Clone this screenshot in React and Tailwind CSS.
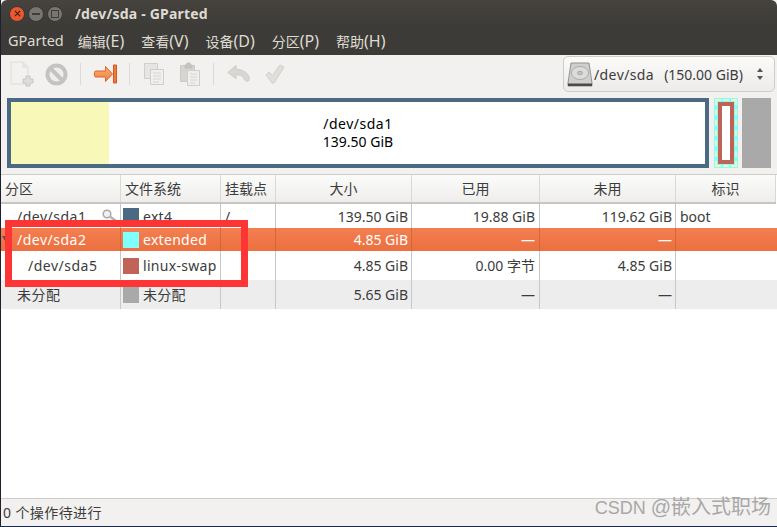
function NewIcon() {
  return (
    <svg width="24" height="26" viewBox="0 0 24 26" className="shrink-0">
      <path d="M1 1h12l5 5v17H1z" fill="#f2f1ef" stroke="#dddcd9" />
      <path d="M13 1v5h5" fill="#e8e7e4" stroke="#dddcd9" />
      <path d="M16 15h4v3h3v4h-3v3h-4v-3h-3v-4h3z" fill="#dcdcd9" stroke="#c6c6c2" />
    </svg>
  );
}
function StopIcon() {
  return (
    <svg width="23" height="23" viewBox="0 0 23 23" className="shrink-0">
      <circle cx="11.5" cy="11.5" r="9" fill="#efeeec" stroke="#c5c3c2" strokeWidth="4" />
      <path d="M5.5 5.500l12 12" stroke="#c5c3c2" strokeWidth="4" />
    </svg>
  );
}
function ApplyArrow() {
  return (
    <svg width="23" height="20" viewBox="0 0 23 20" className="shrink-0">
      <defs>
        <linearGradient id="ar" x1="0" y1="0" x2="0" y2="1">
          <stop offset="0" stopColor="#f6b27c" />
          <stop offset="1" stopColor="#ee7f3c" />
        </linearGradient>
      </defs>
      <path d="M2 7h9.500V2.500L18.500 10l-7 7.500V13H2a1.500 1.500 0 0 1-1.500-1.500v-3A1.500 1.500 0 0 1 2 7z" fill="url(#ar)" stroke="#e0652a" />
      <path d="M19.500 1h3v18h-3z" fill="#ef7b36" stroke="#d8561f" />
    </svg>
  );
}
function CopyIcon() {
  return (
    <svg width="21" height="23" viewBox="0 0 21 23" className="shrink-0">
      <path d="M.5.500h13v15H.5z" fill="#e6e5e3" stroke="#cfcecb" />
      <path d="M6.500 6.500h13v15h-13z" fill="#f0efed" stroke="#cfcecb" />
      <path d="M9 10h8M9 13h8M9 16h8M9 19h6" stroke="#d5d4d1" />
    </svg>
  );
}
function PasteIcon() {
  return (
    <svg width="21" height="24" viewBox="0 0 21 24" className="shrink-0">
      <path d="M.5 3.500h14v16H.5z" fill="#d6d5d2" stroke="#cbcac7" />
      <path d="M5 3h2V1h3v2h2v3H5z" fill="#c6c5c2" stroke="#bfbebb" />
      <path d="M7.500 8.500h12v15h-12z" fill="#f0efed" stroke="#cfcecb" />
      <path d="M10 12h7M10 15h7M10 18h7M10 21h5" stroke="#d5d4d1" />
    </svg>
  );
}
function UndoIcon() {
  return (
    <svg width="23" height="18" viewBox="0 0 23 18" className="shrink-0">
      <path d="M9 .5L.8 7.500 9 13.500V9.800c4.500-.3 7 1 9 5.500 1 1.500 4 1.500 4.200-1C22.500 8.500 16 4.500 9 4.300z" fill="#d8d7d4" stroke="#cbcac7" />
    </svg>
  );
}
function CheckIcon() {
  return (
    <svg width="20" height="20" viewBox="0 0 20 20" className="shrink-0">
      <path d="M1 11l3-3 3.500 3.500L15 1l4 2-10 16H7z" fill="#e0dfdc" stroke="#d0cfcc" />
    </svg>
  );
}
function Disk() {
  return (
    <svg width="26" height="25" viewBox="0 0 26 25" className="shrink-0">
      <path d="M4 1h18l3 20v3H1v-3z" fill="#cfcfcd" stroke="#939390" />
      <ellipse cx="13" cy="11" rx="8.500" ry="6.500" fill="#dcdcda" stroke="#aaa" />
      <ellipse cx="13" cy="11" rx="2.500" ry="1.800" fill="#c4c4c2" stroke="#aaa" />
      <path d="M1 21.500h24V24H1z" fill="#4a4a4a" />
    </svg>
  );
}
function Key() {
  return (
    <svg width="16" height="14" viewBox="0 0 16 14" className="shrink-0">
      <circle cx="5" cy="5" r="3.800" fill="#f2f1ef" stroke="#a9a8a4" strokeWidth="1.500" />
      <path d="M8 7.500l6.500 5" stroke="#b5b4b0" strokeWidth="2.500" />
    </svg>
  );
}
const Sep = () => <div className="w-px h-[22px] bg-[#dcdad7] shrink-0" />;
const cols = "grid grid-cols-[120px_100px_55px_136px_128px_136px_1fr]";
const rows = [
  { h: "h-[24px]", bg: "bg-white", line: "border-r-[#c8c8c8]", name: "/dev/sda1", pad: "pl-[16px]", color: "bg-[#4a6a84]", fs: "ext4", size: "139.50 GiB", used: "19.88 GiB", free: "119.62 GiB", flag: "boot", key: true },
  { h: "h-[23px]", bg: "bg-gradient-to-b from-[#f37f50] to-[#ec6f3f] text-white", line: "border-r-[#d0683f]", name: "/dev/sda2", pad: "pl-[16px]", color: "bg-[#7fffff]", fs: "extended", size: "4.85 GiB", used: "—", free: "—", flag: "", sel: true },
  { h: "h-[29px]", bg: "bg-white", line: "border-r-[#c8c8c8]", name: "/dev/sda5", pad: "pl-[27px]", color: "bg-[#c0645a]", fs: "linux-swap", size: "4.85 GiB", used: "0.00 字节", free: "4.85 GiB", flag: "" },
  { h: "h-[29px]", bg: "bg-[#ededed]", line: "border-r-[#c8c8c8]", name: "未分配", pad: "pl-[16px]", color: "bg-[#a9a9a9]", fs: "未分配", size: "5.65 GiB", used: "—", free: "—", flag: "" },
];
const headers = ["分区", "文件系统", "挂载点", "大小", "已用", "未用", "标识"];
const menus = [["编辑", "(E)"], ["查看", "(V)"], ["设备", "(D)"], ["分区", "(P)"], ["帮助", "(H)"]];
export default function App() {
  return (
    <div className="relative w-[777px] h-[527px] flex flex-col overflow-hidden bg-[#f2f1f0] text-[14px] text-[#3c3c3c] border-l border-b border-l-[#1f1f2e] border-b-[#1b2a4a] font-['Noto_Sans','Noto_Sans_CJK_SC',sans-serif]">
      <div className="h-[27px] shrink-0 flex items-center bg-gradient-to-b from-[#46433e] to-[#3c3b37] rounded-t-[6px]">
        <div className="flex items-center gap-[3px] pl-[8px]">
          <div className="w-[16px] h-[16px] rounded-full bg-[#e8592f] border border-[#3a3733] flex items-center justify-center">
            <svg width="7" height="7" viewBox="0 0 8 8"><path d="M1 1l6 6M7 1L1 7" stroke="#4a2010" strokeWidth="1.500" /></svg>
          </div>
          <div className="w-[16px] h-[16px] rounded-full bg-[#77756f] border border-[#3a3733] flex items-center justify-center">
            <div className="w-[8px] h-[2px] bg-[#3f3d39]" />
          </div>
          <div className="w-[16px] h-[16px] rounded-full bg-[#77756f] border border-[#3a3733] flex items-center justify-center">
            <div className="w-[8px] h-[8px] border-[1.5px] border-[#3f3d39]" />
          </div>
        </div>
        <span className="ml-[12px] font-bold text-[#dfdbd2] text-[14px] tracking-[0.2px]">/dev/sda - GParted</span>
      </div>
      <div className="h-[28px] shrink-0 flex items-center pl-[7px] bg-[#3c3b37] text-[#dfdbd2]">
        <span className="text-[14.5px] mr-[14px]">GParted</span>
        <div className="flex items-center gap-[17px]">
          {menus.map(([a, b]) => (
            <span key={a}>{a}<span className="text-[16px]">{b}</span></span>
          ))}
        </div>
      </div>
      <div className="h-[38px] shrink-0 flex items-center pl-[9px] pr-[2px]">
        <NewIcon />
        <div className="w-[11px]" />
        <StopIcon />
        <div className="w-[12px]" />
        <Sep />
        <div className="w-[13px]" />
        <ApplyArrow />
        <div className="w-[12px]" />
        <Sep />
        <div className="w-[14px]" />
        <CopyIcon />
        <div className="w-[15px]" />
        <PasteIcon />
        <div className="w-[12px]" />
        <Sep />
        <div className="w-[13px]" />
        <UndoIcon />
        <div className="w-[15px]" />
        <CheckIcon />
        <div className="ml-auto w-[212px] h-[36px] rounded-[5px] border border-[#cfcdca] bg-gradient-to-b from-[#fbfbfa] to-[#ecebe9] flex items-center pl-[3px] pr-[10px]">
          <Disk />
          <span className="ml-[1px] tracking-[0.4px]">/dev/sda</span>
          <span className="ml-[10px]">(150.00 GiB)</span>
          <svg width="8" height="14" viewBox="0 0 8 14" className="ml-auto"><path d="M4 1l3 4H1zM4 13l3-4H1z" fill="#555" /></svg>
        </div>
      </div>
      <div className="h-[70px] mt-[5px] shrink-0 flex pl-[6px] pr-[4px]">
        <div className="relative w-[702px] border-[4px] border-[#4a6a84] bg-white flex">
          <div className="absolute left-0 top-0 bottom-0 w-[98px] bg-[#f8f8b8]" />
          <div className="relative flex-1 flex flex-col items-center justify-center text-black leading-[18px]">
            <span className="tracking-[0.5px]">/dev/sda1</span>
            <span>139.50 GiB</span>
          </div>
        </div>
        <div className="ml-[5px] w-[24px] bg-[#7fffff] p-[1px]">
          <div className="h-full border-[2px] border-dashed border-[#f8f8b8] p-[1px]">
            <div className="h-full border-[4px] border-[#bc6458] bg-white" />
          </div>
        </div>
        <div className="ml-[4px] w-[29px] bg-[#a9a9a9]" />
      </div>
      <div className="h-[6px] shrink-0" />
      <div className="flex-1 flex flex-col bg-white border-t border-t-[#cfcdca] min-h-0">
        <div className={`${cols} h-[29px] shrink-0 bg-gradient-to-b from-[#fbfbfa] to-[#efeeec] border-b-2 border-b-[#c8c6c3] mr-[1px]`}>
          {headers.map((h, i) => (
            <div key={h} className={`flex items-center border-r border-r-[#dbd9d6] ${i > 2 ? "justify-center" : "pl-[4px]"}`}>{h}</div>
          ))}
        </div>
        {rows.map((r) => (
          <div key={r.name} className={`${cols} ${r.h} ${r.bg} shrink-0`}>
            <div className={`relative flex items-center ${r.pad} border-r ${r.line}`}>
              {r.sel && <svg width="6" height="5" viewBox="0 0 6 5" className="absolute left-[1px] top-[8px]"><path d="M0 0h6L3 5z" fill="#555" /></svg>}
              <span className="tracking-[0.5px]">{r.name}</span>
              {r.key && <span className="ml-auto mr-[2px]"><Key /></span>}
            </div>
            <div className={`flex items-center pl-[2px] gap-[4px] border-r ${r.line}`}>
              <div className={`w-[16px] h-[16px] ${r.color}`} />
              <span className="tracking-[0.3px]">{r.fs}</span>
            </div>
            <div className={`flex items-center pl-[4px] border-r ${r.line}`}>{r.key ? "/" : ""}</div>
            <div className={`flex items-center justify-end pr-[3px] border-r ${r.line}`}>{r.size}</div>
            <div className={`flex items-center justify-end pr-[4px] border-r ${r.line}`}>{r.used}</div>
            <div className={`flex items-center justify-end pr-[3px] border-r ${r.line}`}>{r.free}</div>
            <div className="flex items-center pl-[4px]">{r.flag}</div>
          </div>
        ))}
      </div>
      <div className="h-[28px] shrink-0 flex items-center border-t border-t-[#cfcdca] pl-[2px] bg-[#f2f1f0] tracking-[0.4px]">0 个操作待进行</div>
      <div className="absolute left-[4px] top-[220px] w-[243px] h-[67px] border-[7px] border-[#ff3535]" />
      <div className="absolute right-[6px] bottom-[6px] flex items-baseline whitespace-pre text-[20px] leading-[24px] text-[#a8a8a8] font-['Liberation_Sans','Noto_Sans_CJK_SC',sans-serif]">
        <span className="text-[18px]">CSDN </span>
        <span>@嵌入式职场</span>
      </div>
    </div>
  );
}
